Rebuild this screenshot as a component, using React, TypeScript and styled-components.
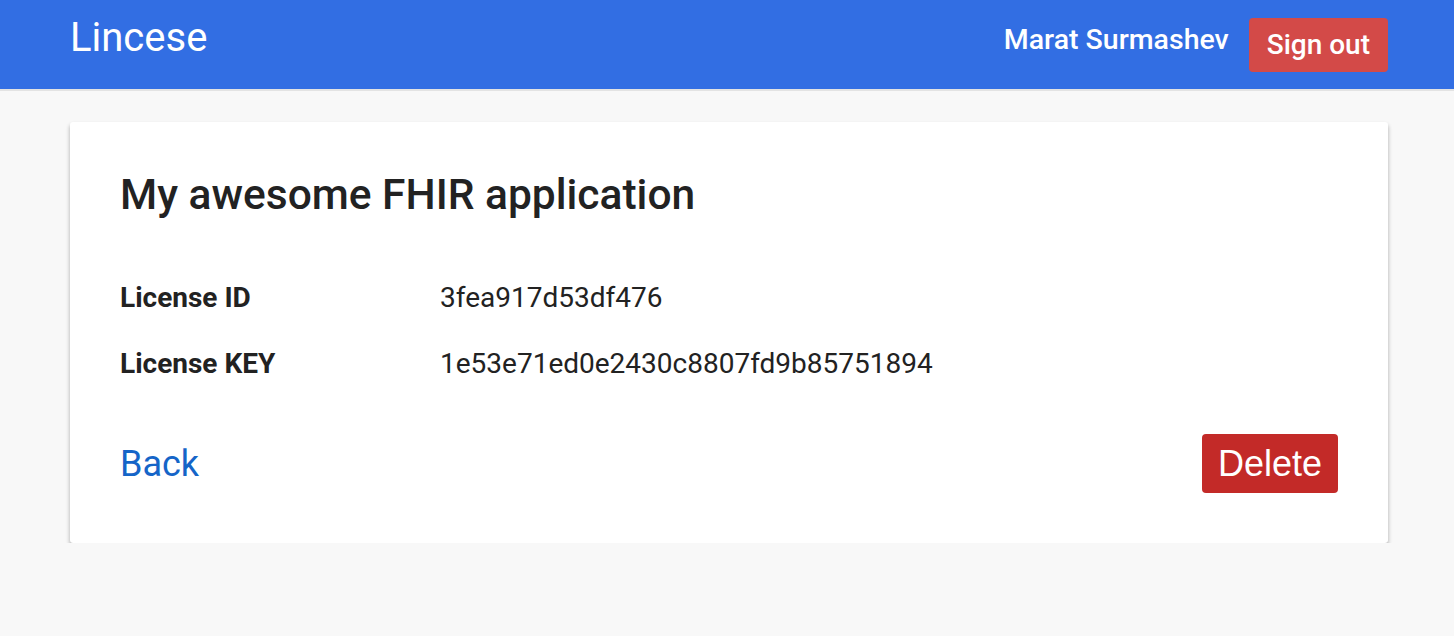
import React from "react";
import styled, { createGlobalStyle } from "styled-components";

const Global = createGlobalStyle`
  html, body { margin: 0; padding: 0; }
  body { background: #f8f8f8; font-family: Roboto, "Noto Sans", sans-serif; }
`;

const Header = styled.header`
  height: 89px;
  background: #326ee3;
  border-bottom: 2px solid #e3e3e3;
  display: flex;
  align-items: center;
  justify-content: space-between;
  padding: 0 66px 0 70px;
`;

const Logo = styled.div`
  color: #fff;
  font-size: 40px;
  font-weight: 400;
  margin-top: -14px;
`;

const UserBox = styled.div`
  display: flex;
  align-items: center;
  gap: 20px;
  margin-top: -10px;
`;

const UserName = styled.span`
  color: #fff;
  font-size: 28.5px;
  font-weight: 500;
`;

const SignOut = styled.button`
  background: #d34a48;
  color: #fff;
  border: none;
  border-radius: 4px;
  font-family: Roboto, sans-serif;
  font-size: 28px;
  font-weight: 500;
  height: 54px;
  padding: 0 18px;
  margin-top: 10px;
`;

const Main = styled.main`
  padding: 31px 66px 0 70px;
`;

const Card = styled.section`
  background: #fff;
  border-radius: 3px;
  box-shadow: 0 3px 4px rgba(0, 0, 0, 0.32);
  padding: 48px 50px 50px 50px;
`;

const Title = styled.h1`
  margin: 0 0 62px 0;
  font-size: 42.5px;
  font-weight: 500;
  color: #222;
  line-height: 50px;
`;

const Rows = styled.div`
  display: grid;
  grid-template-columns: 320px 1fr;
  row-gap: 34px;
  margin-bottom: 54px;
`;

const Label = styled.div`
  font-size: 28px;
  font-weight: 700;
  color: #222;
  line-height: 32px;
`;

const Value = styled.div`
  font-size: 28px;
  color: #222;
  line-height: 32px;
`;

const Footer = styled.div`
  display: flex;
  justify-content: space-between;
  align-items: center;
`;

const BackLink = styled.a`
  color: #1565c8;
  font-size: 36px;
  text-decoration: none;
`;

const DeleteBtn = styled.button`
  background: #c32a28;
  color: #fff;
  border: none;
  border-radius: 4px;
  font-family: "Liberation Sans", Arial, sans-serif;
  font-size: 36px;
  height: 59px;
  width: 136px;
  padding: 0;
`;

export default function App() {
  return (
    <>
      <Global />
      <Header>
        <Logo>Lincese</Logo>
        <UserBox>
          <UserName>Marat Surmashev</UserName>
          <SignOut>Sign out</SignOut>
        </UserBox>
      </Header>
      <Main>
        <Card>
          <Title>My awesome FHIR application</Title>
          <Rows>
            <Label>License ID</Label>
            <Value>3fea917d53df476</Value>
            <Label>License KEY</Label>
            <Value>1e53e71ed0e2430c8807fd9b85751894</Value>
          </Rows>
          <Footer>
            <BackLink href="#">Back</BackLink>
            <DeleteBtn>Delete</DeleteBtn>
          </Footer>
        </Card>
      </Main>
    </>
  );
}
